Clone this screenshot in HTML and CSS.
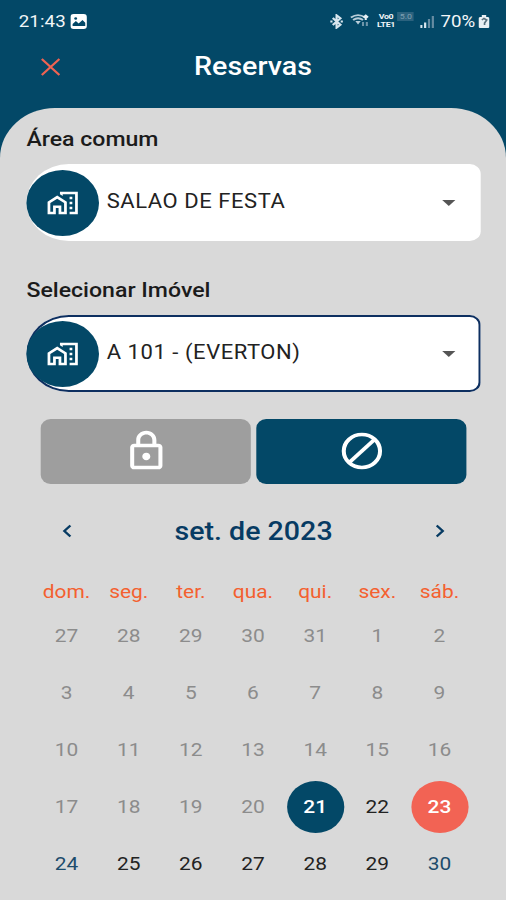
FILE: index.html
```html
<!DOCTYPE html>
<html lang="pt-BR">
<head>
    <meta charset="UTF-8">
    <title>Reservas</title>
    <link rel="stylesheet" href="styles.css">
</head>
<body>
    <svg class="symbols" width="0" height="0">
        <symbol id="home-work" viewBox="0 0 24 24">
            <path d="M1 11v10h6v-5h2v5h6V11L8 6l-7 5zm12 8h-2v-5H5v5H3v-7l5-3.500 5 3.500v7z"/>
            <path d="M17 7h2v2h-2zM17 11h2v2h-2zM17 15h2v2h-2z"/>
            <path d="M10 3v1.970l2 1.430V5h9v14h-4v2h6V3z"/>
        </symbol>
    </svg>

    <div class="screen">
        <div class="status">
            <span class="time">21:43</span>
            <svg class="picture" viewBox="0 0 15 15">
                <rect width="15" height="15" rx="3" fill="#fff"/>
                <circle cx="4.800" cy="4.500" r="1.300" fill="#034867"/>
                <path d="M2 12V10l3-3 2.500 2.500L11 6l2.500 2.800V12z" fill="#034867"/>
            </svg>
            <div class="icons">
                <svg width="12" height="15" viewBox="0 0 12 15" fill="none" stroke="#d9e6ee" stroke-width="2">
                    <path d="M2.500 4l7 6.700L6 13.700V1.300l3.500 3L2.500 11"/>
                    <path d="M.300 7.500h2M9.700 7.500h2"/>
                </svg>
                <svg width="18" height="14" viewBox="0 0 18 14" fill="none" stroke="#b8cdd9" stroke-width="1.900">
                    <path d="M1 3.500Q7.500-1.200 14 3.500M3 6q4.500-3.500 9 0"/>
                    <path d="M5 7h5l-2.500 3.500z" fill="#b8cdd9" stroke="none"/>
                    <path d="M14.500 6V1.500m-2 2l2-2 2 2" stroke="#e6eff4"/>
                    <path d="M12 8v4M15.500 8v4" stroke="#6f95aa"/>
                </svg>
                <span class="volte"><b>Vo0</b><b>LTE1</b></span>
                <span class="net">5.0</span>
                <svg width="13" height="13" viewBox="0 0 13 13">
                    <path d="M0 10h2v3H0zM3.500 7.500h2V13h-2z" fill="#d9e6ee"/>
                    <path d="M7 4h2v9H7zM10.500 1h2v12h-2z" fill="#668ca2"/>
                </svg>
            </div>
            <span class="percent">70%</span>
            <svg class="battery" viewBox="0 0 10 13">
                <path d="M3 0h4v2h1.500Q10 2 10 3.500v8Q10 13 8.500 13h-7Q0 13 0 11.500v-8Q0 2 1.500 2H3z" fill="#e9f0f4"/>
                <path d="M3 5l2-1.500L7.500 5 5.500 8v2" fill="none" stroke="#58707d" stroke-width="1.500"/>
            </svg>
        </div>

        <header class="header">
            <svg class="close" viewBox="0 0 18 18"><path d="M1 1l16 16M17 1L1 17"/></svg>
            <h1>Reservas</h1>
        </header>

        <main class="panel">
            <h2>Área comum</h2>
            <div class="select">
                <span class="badge"><svg><use href="#home-work"/></svg></span>
                <span class="value">SALAO DE FESTA</span>
                <span class="arrow"></span>
            </div>

            <h2>Selecionar Imóvel</h2>
            <div class="select focused">
                <span class="badge"><svg><use href="#home-work"/></svg></span>
                <span class="value">A 101 - (EVERTON)</span>
                <span class="arrow"></span>
            </div>

            <div class="buttons">
                <div class="button locked">
                    <svg viewBox="0 0 24 24">
                        <path d="M18 8h-1V6c0-2.760-2.240-5-5-5S7 3.240 7 6v2H6c-1.100 0-2 .9-2 2v10c0 1.100.9 2 2 2h12c1.100 0 2-.9 2-2V10c0-1.100-.9-2-2-2zM9 6c0-1.660 1.340-3 3-3s3 1.340 3 3v2H9V6zm9 14H6V10h12v10zm-6-3c1.100 0 2-.9 2-2s-.9-2-2-2-2 .9-2 2 .9 2 2 2z"/>
                    </svg>
                </div>
                <div class="button">
                    <svg viewBox="0 0 24 24">
                        <g fill="none" stroke="#fff" stroke-width="2"><circle cx="12" cy="12" r="9"/><path d="M5.600 18.400L18.400 5.600"/></g>
                    </svg>
                </div>
            </div>

            <div class="month">
                <svg viewBox="0 0 10 14"><path d="M8 1.500L2.500 7 8 12.500"/></svg>
                <h3>set. de 2023</h3>
                <svg viewBox="0 0 10 14"><path d="M2 1.500L7.500 7 2 12.500"/></svg>
            </div>

            <div class="week">
                <span>dom.</span><span>seg.</span><span>ter.</span><span>qua.</span><span>qui.</span><span>sex.</span><span>sáb.</span>
            </div>
            <div class="days">
                <span>27</span><span>28</span><span>29</span><span>30</span><span>31</span><span>1</span><span>2</span>
                <span>3</span><span>4</span><span>5</span><span>6</span><span>7</span><span>8</span><span>9</span>
                <span>10</span><span>11</span><span>12</span><span>13</span><span>14</span><span>15</span><span>16</span>
                <span>17</span><span>18</span><span>19</span><span>20</span><span class="today">21</span><span class="open">22</span><span class="selected">23</span>
                <span class="weekend">24</span><span class="open">25</span><span class="open">26</span><span class="open">27</span><span class="open">28</span><span class="open">29</span><span class="weekend">30</span>
            </div>
        </main>
    </div>
</body>
</html>
```

FILE: styles.css
```css
* {
    box-sizing: border-box;
}
body {
    margin: 0;
    height: 900px;
    overflow: hidden;
    background: #034867;
    font-family: Roboto, "Liberation Sans", sans-serif;
}
h1, h2, h3 {
    margin: 0;
    font-weight: 500;
}
.symbols {
    display: block;
}
/* the whole screen is 10% wider than its layout */
.screen {
    width: 460px;
    height: 900px;
    transform: scaleX(1.1);
    transform-origin: 0 0;
}
.status {
    display: flex;
    align-items: center;
    height: 42px;
    padding: 0 15px 0 17px;
    color: #f2f6f8;
}
.time {
    width: 41px;
    font-size: 17px;
    letter-spacing: 0.1px;
}
.picture {
    width: 15px;
    height: 15px;
    margin-left: 6px;
}
.icons {
    display: flex;
    align-items: center;
    gap: 6px;
    margin-left: auto;
}
.volte {
    display: flex;
    flex-direction: column;
    width: 17px;
    font-size: 8px;
    line-height: 8px;
    text-align: center;
    letter-spacing: -0.3px;
}
.net {
    width: 15px;
    margin: -9px 0 0 -4px;
    background: #2b627e;
    color: #7fa0b2;
    font-size: 8px;
    line-height: 9px;
    text-align: center;
}
.percent {
    margin-left: 5px;
    font-size: 17px;
}
.battery {
    width: 10px;
    height: 13px;
    margin-left: 3px;
}
.header {
    display: flex;
    align-items: center;
    justify-content: center;
    position: relative;
    height: 48px;
    color: #fff;
}
.header h1 {
    font-size: 26px;
}
.close {
    position: absolute;
    left: 37px;
    top: 16px;
    width: 18px;
    height: 18px;
    fill: none;
    stroke: #ee6352;
    stroke-width: 2;
}
.panel {
    height: 792px;
    margin-top: 18px;
    padding: 16px 23px 0 24px;
    background: #d9d9d9;
    border-radius: 50px 50px 0 0;
}
.panel h2 {
    height: 30px;
    margin-bottom: 10px;
    color: #1b1b1b;
    font-size: 21px;
    line-height: 31px;
}
.select {
    display: flex;
    align-items: center;
    height: 77px;
    margin-bottom: 34px;
    background: #fff;
    border-radius: 39px 10px 10px 39px;
}
.select.focused {
    box-shadow: inset 0 0 0 2px #0d2f60;
    margin-bottom: 27px;
}
.badge {
    display: flex;
    align-items: center;
    justify-content: center;
    width: 66px;
    height: 66px;
    border-radius: 50%;
    background: #034867;
}
.badge svg {
    width: 30px;
    height: 30px;
    margin-right: 1px;
    fill: #fff;
}
.value {
    margin: -3px 0 0 7px;
    color: #222;
    font-size: 20px;
    letter-spacing: 0.5px;
}
.arrow {
    margin: 0 23px 0 auto;
    border: 6px solid transparent;
    border-top-color: #555;
    border-bottom: 0;
}
.buttons {
    display: flex;
    gap: 5px;
    padding: 0 13px;
}
.button {
    display: flex;
    flex: 1;
    align-items: center;
    justify-content: center;
    height: 65px;
    background: #034867;
    border-radius: 9px;
}
.button.locked {
    background: #9e9e9e;
}
.button svg {
    width: 44px;
    height: 44px;
    margin-top: -2px;
    fill: #fff;
}
.month {
    display: flex;
    align-items: center;
    justify-content: space-between;
    height: 94px;
    padding: 0 32px;
    color: #073b63;
}
.month h3 {
    font-size: 26px;
}
.month svg {
    width: 10px;
    height: 14px;
    fill: none;
    stroke: #073b63;
    stroke-width: 2.2;
}
.week, .days {
    display: grid;
    grid-template-columns: repeat(7, 56.5px);
    justify-content: center;
    margin-left: -1px;
    text-align: center;
    font-size: 19px;
}
.week {
    height: 30px;
    color: #f4602f;
    line-height: 28px;
}
.days {
    grid-auto-rows: 56.8px;
    align-items: center;
    justify-items: center;
    color: #8c8c8c;
}
.days span {
    width: 52px;
    height: 52px;
    border-radius: 50%;
    line-height: 52px;
}
.days .open {
    color: #222;
}
.days .weekend {
    color: #1d4c6c;
}
.days .today, .days .selected {
    color: #fff;
    font-weight: 500;
    background: #034867;
}
.days .selected {
    background: #f26354;
}
```
